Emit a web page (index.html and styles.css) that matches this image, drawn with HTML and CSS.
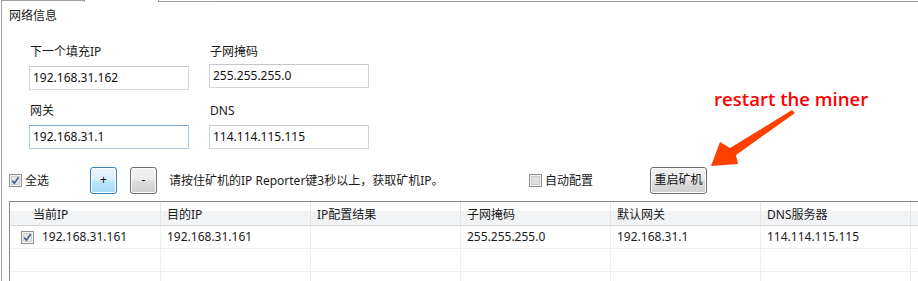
FILE: index.html
```html
<!DOCTYPE html>
<html lang="zh-CN">
<head>
<meta charset="utf-8">
<title>网络信息</title>
<link rel="stylesheet" href="styles.css">
</head>
<body>
<div class="window">
  <div class="tabs">
    <span class="tab t1"></span><span class="tab t2"></span><span class="tab t3"></span><span class="tab rest"></span>
  </div>
  <div class="page">
    <div class="title">网络信息</div>
    <div class="form">
      <div class="field"><div class="label">下一个填充IP</div><div class="input">192.168.31.162</div></div>
      <div class="field"><div class="label">子网掩码</div><div class="input up">255.255.255.0</div></div>
      <div class="field"><div class="label">网关</div><div class="input focus">192.168.31.1</div></div>
      <div class="field"><div class="label">DNS</div><div class="input">114.114.115.115</div></div>
    </div>
    <div class="actions">
      <div class="check all">
        <svg class="box" width="13" height="13" viewBox="0 0 13 13"><rect x="0.5" y="0.5" width="12" height="12" fill="#f4f4f4" stroke="#8e8f8f"/><rect x="2.5" y="2.5" width="8" height="8" fill="#e6e6e6" stroke="#d0d0d0"/><path d="M3.3 6.6 L5.4 9.2 L9.6 3.2" fill="none" stroke="#4a5f97" stroke-width="1.7"/></svg>
        <span>全选</span>
      </div>
      <div class="btn hot">+</div>
      <div class="btn minus">-</div>
      <div class="hint">请按住矿机的IP Reporter键3秒以上，获取矿机IP。</div>
      <div class="check auto">
        <svg class="box" width="13" height="13" viewBox="0 0 13 13"><rect x="0.5" y="0.5" width="12" height="12" fill="#f4f4f4" stroke="#8e8f8f"/><rect x="2.5" y="2.5" width="8" height="8" fill="#dedede" stroke="#cdcdcd"/></svg>
        <span>自动配置</span>
      </div>
      <div class="btn restart">重启矿机</div>
    </div>
    <div class="table">
      <div class="row head">
        <div class="cell c1 h1">当前IP</div>
        <div class="cell">目的IP</div>
        <div class="cell">IP配置结果</div>
        <div class="cell">子网掩码</div>
        <div class="cell">默认网关</div>
        <div class="cell">DNS服务器</div>
        <div class="cell fill"></div>
      </div>
      <div class="row">
        <div class="cell c1 b1">
          <svg class="box" width="13" height="13" viewBox="0 0 13 13"><rect x="0.5" y="0.5" width="12" height="12" fill="#f4f4f4" stroke="#8e8f8f"/><rect x="2.5" y="2.5" width="8" height="8" fill="#e6e6e6" stroke="#d0d0d0"/><path d="M3.3 6.6 L5.4 9.2 L9.6 3.2" fill="none" stroke="#4a5f97" stroke-width="1.7"/></svg>
          <span>192.168.31.161</span>
        </div>
        <div class="cell">192.168.31.161</div>
        <div class="cell"></div>
        <div class="cell">255.255.255.0</div>
        <div class="cell">192.168.31.1</div>
        <div class="cell">114.114.115.115</div>
        <div class="cell fill"></div>
      </div>
      <div class="row">
        <div class="cell c1"></div><div class="cell"></div><div class="cell"></div><div class="cell"></div><div class="cell"></div><div class="cell"></div><div class="cell fill"></div>
      </div>
      <div class="row">
        <div class="cell c1"></div><div class="cell"></div><div class="cell"></div><div class="cell"></div><div class="cell"></div><div class="cell"></div><div class="cell fill"></div>
      </div>
    </div>
  </div>
  <div class="note">restart the miner</div>
  <svg class="arrow" width="918" height="281" viewBox="0 0 918 281">
    <polygon points="792,110 795,113 736,155 738,164 711,166 720,142 730,148" fill="#ff4000"/>
  </svg>
</div>
</body>
</html>
```
FILE: styles.css
```css
html, body {
  margin: 0;
  padding: 0;
  background: #ffffff;
}
body {
  font-family: "Noto Sans", "Noto Sans CJK SC", sans-serif;
  font-size: 12px;
  color: #1a1a1a;
  width: 918px;
  height: 281px;
  overflow: hidden;
}
.window {
  position: relative;
  margin-left: 1px;
  border-left: 1px solid #a0a0a0;
  height: 281px;
  overflow: hidden;
}
.tabs {
  display: flex;
  height: 2px;
}
.tab {
  box-sizing: border-box;
  height: 2px;
  border-right: 1px solid #a0a0a0;
}
.t1 { width: 83px; border-top: 1px solid #a0a0a0; }
.t2 { width: 74px; }
.t3 { width: 55px; margin-top: 1px; height: 1px; border-top: 1px solid #a0a0a0; }
.rest { flex: 1; margin-top: 1px; height: 1px; border-top: 1px solid #9a9a9a; border-right: 0; }
.page {
  padding: 6px 0 0 7px;
}
.title {
  line-height: 16px;
  height: 16px;
}
.form {
  display: grid;
  grid-template-columns: 160px 160px;
  column-gap: 20px;
  row-gap: 13px;
  margin: 20px 0 0 20px;
}
.label {
  line-height: 16px;
  height: 16px;
  padding-left: 1px;
  margin-bottom: 6px;
}
.input {
  box-sizing: border-box;
  height: 24px;
  line-height: 22px;
  padding-left: 3px;
  border: 1px solid #d3d7dc;
  border-top-color: #c4c8cd;
  background: #fff;
  color: #111;
}
.input.up {
  margin-top: -2px;
}
.input.focus {
  border-color: #a9c9e4;
  border-top-color: #7fa7c9;
}
.actions {
  display: flex;
  align-items: center;
  height: 27px;
  margin-top: 18px;
}
.check {
  display: flex;
  align-items: center;
  height: 16px;
  line-height: 16px;
}
.check .box {
  display: block;
  margin-right: 3px;
}
.check.all { width: 81px; }
.check.auto { width: 121px; }
.btn {
  box-sizing: border-box;
  height: 27px;
  line-height: 24px;
  text-align: center;
  border: 1px solid #707070;
  border-radius: 3px;
  box-shadow: inset 0 0 0 1px #fbfbfb;
  background: linear-gradient(#f2f2f2 0%, #ebebeb 48%, #dddddd 52%, #cfcfcf 100%);
  color: #111;
}
.btn.hot {
  width: 27px;
  border-color: #3c7fb1;
  background: linear-gradient(#eaf6fd 0%, #d9f0fc 48%, #bee6fd 52%, #a7d9f5 100%);
}
.btn.minus {
  width: 27px;
  margin-left: 13px;
}
.hint {
  width: 360px;
  margin-left: 12px;
  line-height: 16px;
}
.btn.restart {
  width: 57px;
}
.table {
  margin-top: 7px;
  width: 930px;
  border-top: 1px solid #828790;
  border-left: 1px solid #828790;
}
.row {
  display: flex;
  height: 23px;
  box-sizing: border-box;
  border-bottom: 1px solid #eff0f1;
}
.row.head {
  height: 24px;
  border-bottom: 1px solid #d5d5d5;
  background: linear-gradient(#ffffff 0%, #ffffff 38%, #f2f3f5 40%, #f2f3f5 100%);
}
.cell {
  box-sizing: border-box;
  width: 150px;
  flex: none;
  padding-left: 6px;
  line-height: 22px;
  border-right: 1px solid #eceef0;
  white-space: nowrap;
}
.head .cell {
  padding-top: 2px;
  line-height: 21px;
  border-right: 1px solid #e3e5e8;
}
.cell.c1 {
  width: 151px;
}
.cell.h1 {
  padding-left: 23px;
}
.cell.b1 {
  display: flex;
  align-items: center;
  padding-left: 11px;
}
.b1 .box {
  display: block;
  margin-right: 8px;
}
.cell.fill {
  width: 30px;
}
.note {
  position: absolute;
  left: 712px;
  top: 89px;
  font-family: "Open Sans", sans-serif;
  font-weight: 600;
  font-size: 18.6px;
  line-height: 20px;
  color: #ff0000;
  white-space: nowrap;
}
.arrow {
  position: absolute;
  left: -2px;
  top: 0;
  pointer-events: none;
}
```
